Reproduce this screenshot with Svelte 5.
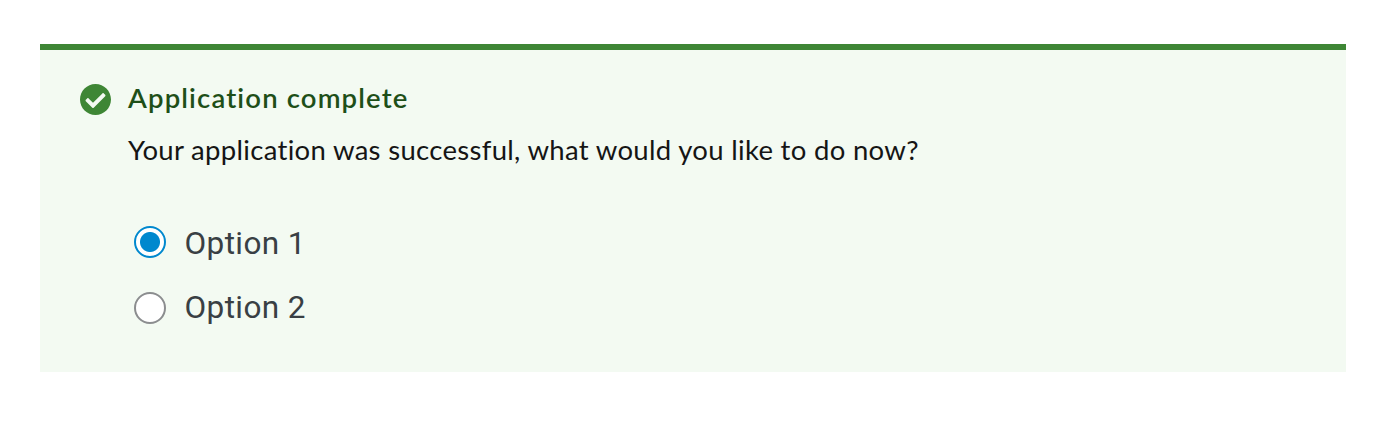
<script>
  let selected = $state('Option 1');
  const options = ['Option 1', 'Option 2'];
</script>

<section class="alert">
  <svg class="status" viewBox="8 8 496 496" aria-hidden="true">
    <path fill="#3e8635" d="M504 256c0 136.967-111.033 248-248 248S8 392.967 8 256 119.033 8 256 8s248 111.033 248 248zM227.314 387.314l184-184c6.248-6.248 6.248-16.379 0-22.627l-22.627-22.627c-6.248-6.249-16.379-6.249-22.628 0L216 308.118l-70.059-70.059c-6.248-6.248-16.379-6.248-22.628 0l-22.627 22.627c-6.248 6.248-6.248 16.379 0 22.627l104 104c6.249 6.249 16.379 6.249 22.628.001z" />
  </svg>
  <div class="content">
    <h4>Application complete</h4>
    <p>Your application was successful, what would you like to do now?</p>
    <div class="options">
      {#each options as option}
        <label>
          <input type="radio" name="next" value={option} bind:group={selected} />
          <span>{option}</span>
        </label>
      {/each}
    </div>
  </div>
</section>

<style>
  .alert {
    box-sizing: border-box;
    display: flex;
    gap: 17px;
    width: 1306px;
    height: 328px;
    margin: 44px 0 0 40px;
    padding: 30px 40px;
    border-top: 6px solid #3e8635;
    background: #f3faf2;
    color: #151515;
    font-family: Lato, "Open Sans", sans-serif;
    font-variant-ligatures: none;
  }
  .status { width: 31px; height: 31px; margin-top: 4px; flex: none; }
  h4, p { margin: 0; white-space: nowrap; }
  h4 { color: #1e4f18; font-size: 27.5px; line-height: 36px; font-weight: 600; letter-spacing: 1.14px; }
  p { margin-top: 14px; font-size: 27.5px; line-height: 40px; font-weight: 400; letter-spacing: 0.31px; }
  .options { display: flex; flex-direction: column; gap: 24px; margin: 52px 0 0 6px; }
  label { display: flex; align-items: flex-start; gap: 18.5px; height: 40px; font: 31.5px/40px Roboto, "Noto Sans", sans-serif; letter-spacing: 0.4px; color: #393f44; }
  input { appearance: none; box-sizing: border-box; width: 32px; height: 32px; margin: 4px 0 0; border: 2px solid #8b8d8f; border-radius: 50%; background: #fff; }
  label + label input { margin-top: 6px; }
  input:checked { border-color: #0088ce; background: radial-gradient(circle, #0088ce 9.5px, #fff 10.5px); }
  label span { padding-top: 2px; }
</style>
